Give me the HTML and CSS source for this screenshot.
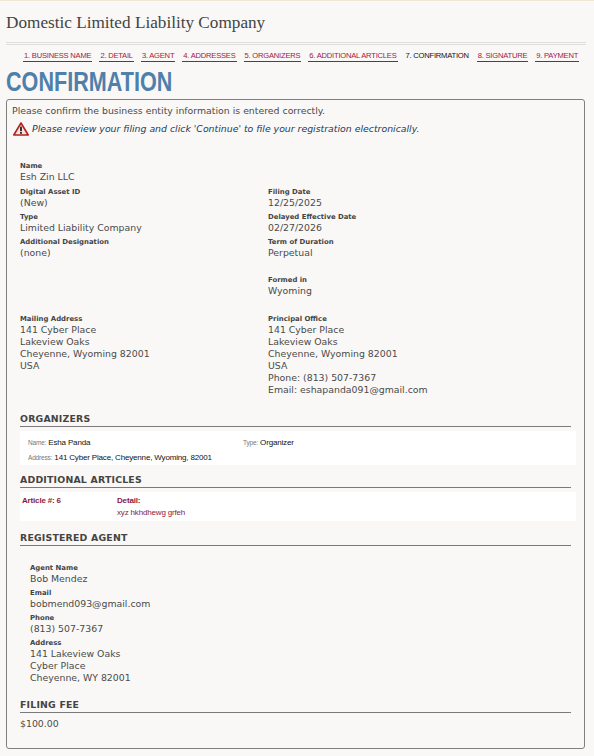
FILE: index.html
```html
<!DOCTYPE html>
<html lang="en">
<head>
    <meta charset="UTF-8">
    <meta name="viewport" content="width=device-width, initial-scale=1.0">
    <title>Confirmation</title>
    <link rel="stylesheet" href="styles.css">
</head>
<body>

<div class="page-header">
    <h1>Domestic Limited Liability Company</h1>
</div>

<ul class="steps">
    <li><a href="#">1. BUSINESS NAME</a></li>
    <li><a href="#">2. DETAIL</a></li>
    <li><a href="#">3. AGENT</a></li>
    <li><a href="#">4. ADDRESSES</a></li>
    <li><a href="#">5. ORGANIZERS</a></li>
    <li><a href="#">6. ADDITIONAL ARTICLES</a></li>
    <li class="current">7. CONFIRMATION</li>
    <li><a href="#">8. SIGNATURE</a></li>
    <li><a href="#">9. PAYMENT</a></li>
</ul>

<h2 class="page-title">CONFIRMATION</h2>

<div class="card">
    <p class="intro">Please confirm the business entity information is entered correctly.</p>
    <p class="warning">
        <svg class="warning-icon" width="16" height="14" viewBox="0 0 16 14">
            <path d="M8 1 L15.2 13 L0.8 13 Z" fill="#f4e4e0" stroke="#b3201c" stroke-width="1.6" stroke-linejoin="round"/>
            <rect x="7" y="4.6" width="2" height="4.6" fill="#333"/>
            <rect x="7" y="10" width="2" height="1.8" fill="#333"/>
        </svg>
        <em>Please review your filing and click 'Continue' to file your registration electronically.</em>
    </p>

    <div class="field name-field">
        <div class="label">Name</div>
        <div class="value">Esh Zin LLC</div>
    </div>

    <div class="two-col">
        <div class="col">
            <div class="field">
                <div class="label">Digital Asset ID</div>
                <div class="value">(New)</div>
            </div>
            <div class="field">
                <div class="label">Type</div>
                <div class="value">Limited Liability Company</div>
            </div>
            <div class="field">
                <div class="label">Additional Designation</div>
                <div class="value">(none)</div>
            </div>
        </div>
        <div class="col">
            <div class="field">
                <div class="label">Filing Date</div>
                <div class="value">12/25/2025</div>
            </div>
            <div class="field">
                <div class="label">Delayed Effective Date</div>
                <div class="value">02/27/2026</div>
            </div>
            <div class="field">
                <div class="label">Term of Duration</div>
                <div class="value">Perpetual</div>
            </div>
            <div class="field formed">
                <div class="label">Formed in</div>
                <div class="value">Wyoming</div>
            </div>
        </div>
    </div>

    <div class="two-col addresses">
        <div class="col">
            <div class="field">
                <div class="label">Mailing Address</div>
                <div class="value">141 Cyber Place<br>Lakeview Oaks<br>Cheyenne, Wyoming 82001<br>USA</div>
            </div>
        </div>
        <div class="col">
            <div class="field">
                <div class="label">Principal Office</div>
                <div class="value">141 Cyber Place<br>Lakeview Oaks<br>Cheyenne, Wyoming 82001<br>USA<br>Phone: (813) 507-7367<br>Email: eshapanda091@gmail.com</div>
            </div>
        </div>
    </div>

    <h3 class="section organizers-head">ORGANIZERS</h3>
    <div class="panel organizer">
        <div class="organizer-row">
            <span class="organizer-name"><span class="small-label">Name:</span> Esha Panda</span>
            <span><span class="small-label">Type:</span> Organizer</span>
        </div>
        <div><span class="small-label">Address:</span> 141 Cyber Place, Cheyenne, Wyoming, 82001</div>
    </div>

    <h3 class="section">ADDITIONAL ARTICLES</h3>
    <div class="panel article">
        <div class="article-num">Article #: 6</div>
        <div>
            <div class="article-label">Detail:</div>
            <div class="article-text">xyz hkhdhewg grfeh</div>
        </div>
    </div>

    <h3 class="section">REGISTERED AGENT</h3>
    <div class="agent">
        <div class="field">
            <div class="label">Agent Name</div>
            <div class="value">Bob Mendez</div>
        </div>
        <div class="field">
            <div class="label">Email</div>
            <div class="value">bobmend093@gmail.com</div>
        </div>
        <div class="field">
            <div class="label">Phone</div>
            <div class="value">(813) 507-7367</div>
        </div>
        <div class="field">
            <div class="label">Address</div>
            <div class="value">141 Lakeview Oaks<br>Cyber Place<br>Cheyenne, WY 82001</div>
        </div>
    </div>

    <h3 class="section fee-head">FILING FEE</h3>
    <div class="value fee">$100.00</div>
</div>

</body>
</html>
```

FILE: styles.css
```css
body {
    font-family: "DejaVu Sans", Verdana, sans-serif;
    font-size: 9.35px;
    color: #4a4a4a;
    background-color: #f9f8f6;
    margin: 0;
    padding: 0;
    border-top: 1px solid #efe6d4;
}
.page-header {
    margin: 0 8px 0 6px;
    height: 41px;
    border-bottom: 3px double #dfdedb;
}
.page-header h1 {
    margin: 0;
    padding-top: 12px;
    font-family: "Liberation Serif", Georgia, serif;
    font-size: 17.2px;
    line-height: 20px;
    font-weight: normal;
    color: #444;
}
.steps {
    list-style: none;
    margin: 0;
    padding: 5px 0 0 23px;
    display: flex;
    gap: 7px;
    font-family: "Liberation Sans", Arial, sans-serif;
    font-size: 7.6px;
    letter-spacing: -0.22px;
    line-height: 11px;
    white-space: nowrap;
}
.steps a {
    display: block;
    color: #a5173f;
    text-decoration: none;
    padding: 0 1px;
    border-bottom: 1px solid #a5173f;
}
.steps .current {
    color: #111;
    padding: 0 1px;
}
.page-title {
    margin: 6px 0 0 6px;
    font-family: "Liberation Sans", Arial, sans-serif;
    font-size: 27px;
    line-height: 28px;
    font-weight: bold;
    color: #4f7fab;
    transform: scaleX(0.8);
    transform-origin: left;
}
.card {
    margin: 3px 9px 0 6px;
    height: 650px;
    box-sizing: border-box;
    border: 1px solid #7f7f7f;
    border-radius: 3px;
    padding: 5px 0 0 5px;
}
.intro {
    margin: 0;
    line-height: 12px;
}
.warning {
    margin: 5px 0 0;
    display: flex;
    align-items: center;
    gap: 3px;
    color: #1c3a5c;
    line-height: 12px;
}
.warning-icon {
    margin-left: 1px;
}
.name-field {
    margin-top: 26px;
    margin-bottom: 5px;
}
.field {
    padding-left: 8px;
}
.two-col .field, .agent .field {
    margin-bottom: 4px;
}
.label {
    font-size: 6.9px;
    line-height: 9px;
    font-weight: bold;
    color: #444;
}
.value {
    line-height: 12px;
}
.two-col {
    display: flex;
}
.two-col .col {
    width: 248px;
}
.two-col .formed {
    margin-top: 17px;
}
.addresses {
    margin-top: 14px;
}
.section {
    margin: 0 13px 0 8px;
    font-size: 9.35px;
    line-height: 15px;
    letter-spacing: 0.2px;
    color: #444;
    border-bottom: 1px solid #7a7a7a;
}
.organizers-head {
    margin-top: 11px;
}
.panel {
    margin: 4px 8px 9px 8px;
    background-color: #fff;
    font-family: "Liberation Sans", Arial, sans-serif;
    font-size: 8px;
    letter-spacing: -0.17px;
    color: #111;
}
.small-label {
    font-size: 6.5px;
    color: #777;
}
.organizer {
    height: 34px;
    box-sizing: border-box;
    padding: 4px 8px 0;
    line-height: 15px;
    margin-bottom: 7px;
}
.organizer-row {
    display: flex;
}
.organizer-name {
    width: 215px;
}
.article {
    height: 29px;
    box-sizing: border-box;
    padding: 3px 2px 0;
    display: flex;
    color: #8a1a3c;
    line-height: 12px;
}
.article-num {
    width: 95px;
    font-weight: bold;
}
.article-label {
    font-weight: bold;
}
.agent {
    margin-top: 18px;
    padding-left: 10px;
}
.fee-head {
    margin-top: 13px;
}
.fee {
    margin: 5px 0 0 8px;
}
```
